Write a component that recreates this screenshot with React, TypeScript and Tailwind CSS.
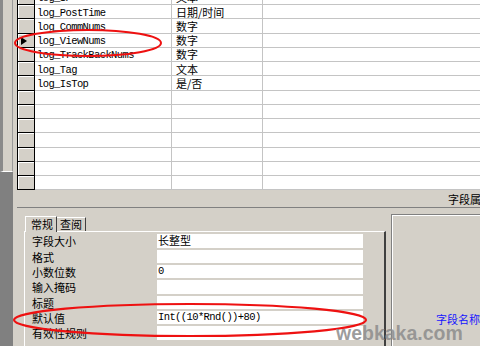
import React from 'react'

type FieldRow = { name: string; type: string; current?: boolean }

const fields: FieldRow[] = [
  { name: 'log_IP', type: '文本' },
  { name: 'log_PostTime', type: '日期/时间' },
  { name: 'log_CommNums', type: '数字' },
  { name: 'log_ViewNums', type: '数字', current: true },
  { name: 'log_TrackBackNums', type: '数字' },
  { name: 'log_Tag', type: '文本' },
  { name: 'log_IsTop', type: '是/否' },
  { name: '', type: '' },
  { name: '', type: '' },
  { name: '', type: '' },
  { name: '', type: '' },
  { name: '', type: '' },
  { name: '', type: '' },
  { name: '', type: '' }
]

const props = [
  { label: '字段大小', value: '长整型', cjk: true },
  { label: '格式', value: '' },
  { label: '小数位数', value: '0' },
  { label: '输入掩码', value: '' },
  { label: '标题', value: '' },
  { label: '默认值', value: 'Int((10*Rnd())+80)' },
  { label: '有效性规则', value: '' }
]

const mono = "font-['Liberation_Mono',monospace] text-[10.5px] tracking-[-0.6px]"
const cjk = "font-['Noto_Sans_CJK_SC',sans-serif] text-[11px]"

function GridRow({ row }: { row: FieldRow }) {
  return (
    <div className="flex h-[14.25px]">
      <div className="w-[18px] shrink-0 border-l border-r border-b border-black bg-[#d4d0c8] flex items-center">
        <div className="w-full h-full border-t border-l border-white flex items-center pl-[2px]">
          {row.current && <span className="block w-0 h-0 border-y-[4px] border-y-transparent border-l-[6px] border-l-black" />}
        </div>
      </div>
      <div className={`w-[137px] shrink-0 bg-white border-b border-r border-[#c4c4c4] pl-[2px] pt-[3.5px] leading-[9.75px] text-black whitespace-nowrap ${mono}`}>
        {row.name}
      </div>
      <div className={`w-[91px] shrink-0 bg-white border-b border-r border-[#c4c4c4] pl-[4px] pt-[1.5px] leading-[11.5px] text-black whitespace-nowrap ${cjk}`}>
        {row.type}
      </div>
      <div className="flex-1 bg-white border-b border-[#c4c4c4]" />
    </div>
  )
}

export default function App() {
  return (
    <div className="relative w-[480px] h-[346px] overflow-hidden bg-[#d4d0c8] flex">
      <div className="w-[13px] shrink-0 flex flex-col">
        <div className="h-[172px] bg-[#d4d0c8] border-l-[3px] border-l-[#8a8a8a] border-r border-r-[#9a9a9a] border-b border-b-white" />
        <div className="flex-1 bg-[#808080]" />
      </div>

      <div className="flex-1 flex flex-col pl-[4px]">
        <div className="-mt-[9.25px]">
          {fields.map((row, i) => (
            <GridRow key={i} row={row} />
          ))}
        </div>

        <div className={`h-[18px] shrink-0 pl-[431px] whitespace-nowrap text-black leading-[18px] border-b border-[#808080] ${cjk}`}>
          字段属性
        </div>
        <div className="h-px bg-white" />

        <div className="flex items-start">
          <div className="ml-[7px] mt-[8px] w-[362px] shrink-0">
            <div className={`flex items-end h-[15px] text-black ${cjk}`}>
              <div className="relative z-10 w-[32px] h-[16px] -mb-px bg-[#d4d0c8] border-t border-l border-white border-r border-r-[#404040] pl-[5px] leading-[14px] ml-px">
                常规
              </div>
              <div className="w-[29px] h-[14px] border-t border-white border-r border-r-[#404040] pl-[3px] leading-[13px]">
                查阅
              </div>
            </div>
            <div className="border-t border-l border-white border-r-2 border-r-[#404040] h-[120px] pt-[2px]">
              {props.map((p, i) => (
                <div key={i} className="flex h-[15.33px]">
                  <div className={`w-[132px] shrink-0 pl-[7px] pt-[1px] text-black leading-[13px] ${cjk}`}>{p.label}</div>
                  <div
                    className={`w-[206px] shrink-0 h-[13.33px] bg-white pl-[1px] text-black leading-[13.33px] whitespace-nowrap ${
                      p.cjk ? cjk : mono
                    }`}
                  >
                    {p.value}
                  </div>
                </div>
              ))}
            </div>
          </div>

          <div className="ml-[5px] mt-[6px] flex-1 h-[140px] border-t border-l border-[#808080]">
            <div className={`h-full border-t border-l border-white pl-[43px] pt-[97px] text-[#1515ff] whitespace-nowrap leading-[12px] ${cjk}`}>
              字段名称
            </div>
          </div>
        </div>
      </div>

      <svg className="absolute inset-0 pointer-events-none" width="480" height="346" viewBox="0 0 480 346">
        <ellipse cx="88" cy="43" rx="73" ry="13" fill="none" stroke="#ee1111" strokeWidth="2" />
        <ellipse cx="190" cy="320" rx="176" ry="16" fill="none" stroke="#ee1111" strokeWidth="2.2" />
      </svg>
      <div className="absolute left-[336px] top-[322px] font-['Liberation_Sans',sans-serif] font-bold text-[19.5px] leading-[22px] text-[#8c8c8c]/85 pointer-events-none">
        webkaka.com
      </div>
    </div>
  )
}
